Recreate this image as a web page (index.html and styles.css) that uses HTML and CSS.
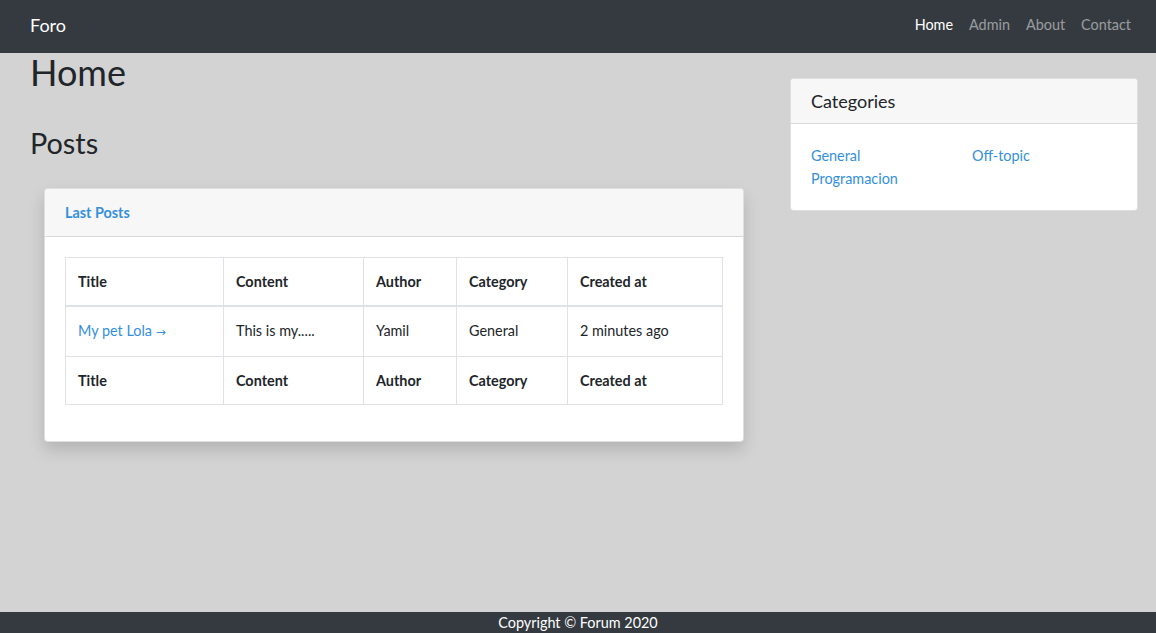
FILE: index.html
```html
<!DOCTYPE html>
<html lang="en">
<head>
<meta charset="utf-8">
<title>Foro</title>
<link rel="stylesheet" href="styles.css">
</head>
<body>
<nav class="navbar">
  <a class="brand" href="#">Foro</a>
  <ul class="nav">
    <li><a class="nav-link active" href="#">Home</a></li>
    <li><a class="nav-link" href="#">Admin</a></li>
    <li><a class="nav-link" href="#">About</a></li>
    <li><a class="nav-link" href="#">Contact</a></li>
  </ul>
</nav>
<main class="main">
  <section class="col-left">
    <h1 class="page-title">Home</h1>
    <h2 class="section-title">Posts</h2>
    <div class="card card-shadow">
      <div class="card-header"><a class="header-link" href="#">Last Posts</a></div>
      <div class="card-body">
        <table class="table">
          <thead>
            <tr>
              <th class="c-title">Title</th>
              <th class="c-content">Content</th>
              <th class="c-author">Author</th>
              <th class="c-category">Category</th>
              <th class="c-created">Created at</th>
            </tr>
          </thead>
          <tbody>
            <tr>
              <td><a class="link" href="#">My pet Lola <span class="arrow">&rarr;</span></a></td>
              <td>This is my.....</td>
              <td>Yamil</td>
              <td>General</td>
              <td>2 minutes ago</td>
            </tr>
          </tbody>
          <tfoot>
            <tr>
              <th>Title</th>
              <th>Content</th>
              <th>Author</th>
              <th>Category</th>
              <th>Created at</th>
            </tr>
          </tfoot>
        </table>
      </div>
    </div>
  </section>
  <aside class="col-right">
    <div class="card">
      <div class="card-header"><h5 class="card-title">Categories</h5></div>
      <div class="card-body">
        <div class="cat-grid">
          <a class="link" href="#">General</a>
          <a class="link" href="#">Off-topic</a>
          <a class="link" href="#">Programacion</a>
        </div>
      </div>
    </div>
  </aside>
</main>
<footer class="footer">Copyright &copy; Forum 2020</footer>
</body>
</html>
```

FILE: styles.css
```css
* { box-sizing: border-box; }
html, body { height: 100%; }
body {
  margin: 0;
  font-family: Lato, "Open Sans", sans-serif;
  font-size: 14.4px;
  line-height: 1.6;
  color: #212529;
  background: #d3d3d3;
  display: flex;
  flex-direction: column;
  min-height: 100vh;
}
a { text-decoration: none; }

.navbar {
  height: 53px;
  flex: 0 0 53px;
  background: #343a40;
  display: flex;
  align-items: center;
  justify-content: space-between;
  padding: 0 17px 3px 30px;
}
.brand {
  color: #fff;
  font-size: 18px;
  line-height: 24px;
}
.nav {
  list-style: none;
  margin: 0;
  padding: 0;
  display: flex;
}
.nav-link {
  display: block;
  padding: 8px;
  color: rgba(255, 255, 255, 0.5);
}
.nav-link.active { color: #fff; }

.main {
  flex: 1;
  display: flex;
  align-items: flex-start;
  padding: 0 18px 0 30px;
}
.col-left { flex: 0 0 728px; }
.col-right { flex: 0 0 348px; margin-left: 31px; margin-top: 25px; }

.page-title {
  margin: 0;
  font-size: 36px;
  font-weight: 400;
  line-height: 38px;
}
.section-title {
  margin: 35px 0 0;
  font-size: 28.8px;
  font-weight: 400;
  line-height: 34.5px;
}

.card {
  background: #fff;
  border: 1px solid rgba(0, 0, 0, 0.125);
  border-radius: 4px;
}
.card-shadow {
  margin: 27px 15px 0 14px;
  box-shadow: 0 8px 16px rgba(0, 0, 0, 0.15);
}
.card-header {
  background: #f7f7f7;
  border-bottom: 1px solid rgba(0, 0, 0, 0.125);
  padding: 12px 20px;
  line-height: 23px;
  border-radius: 3px 3px 0 0;
}
.col-right .card-header { padding: 11px 20px; }
.header-link {
  color: #3490dc;
  font-weight: 700;
}
.card-title {
  margin: 0;
  font-size: 18px;
  font-weight: 400;
  line-height: 22px;
}
.card-body { padding: 20px; }

.table {
  width: 657px;
  border-collapse: collapse;
  table-layout: fixed;
  margin-bottom: 16px;
}
.table th, .table td {
  border: 1px solid #dee2e6;
  padding: 12px;
  text-align: left;
  vertical-align: top;
  line-height: 23px;
  white-space: nowrap;
}
.table th { font-weight: 700; }
.table thead th { border-bottom: 2px solid #dee2e6; }
.c-title { width: 158px; }
.c-content { width: 140px; }
.c-author { width: 93px; }
.c-category { width: 111px; }
.c-created { width: 155px; }

.link { color: #3490dc; }
.arrow { font-family: "DejaVu Sans", sans-serif; font-size: 12px; }

.cat-grid {
  display: grid;
  grid-template-columns: 161px 1fr;
  line-height: 23px;
}

.footer {
  flex: 0 0 21px;
  background: #343a40;
  color: #fff;
  text-align: center;
  line-height: 22px;
  height: 21px;
}
```
